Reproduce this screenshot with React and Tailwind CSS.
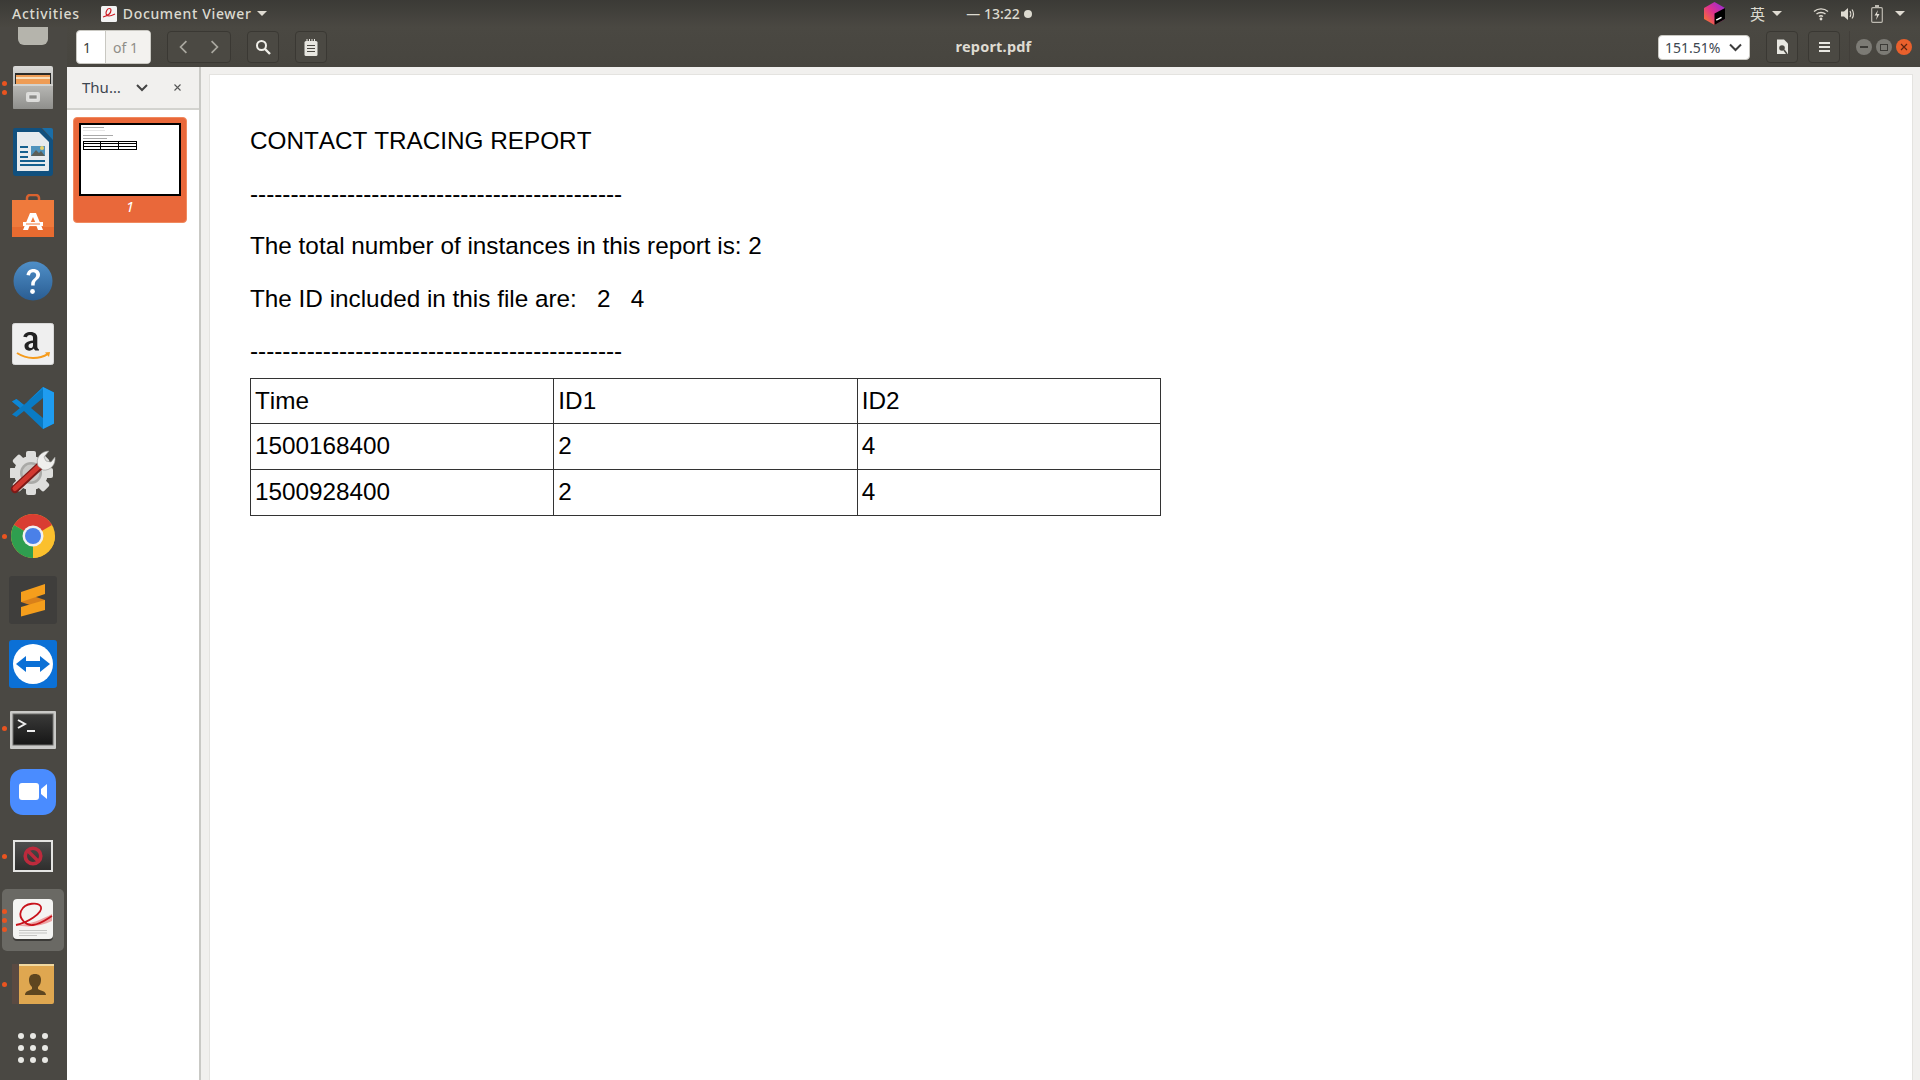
import React from "react";

const UI = { fontFamily: '"Noto Sans", "Open Sans", sans-serif' };

function Files() {
  return (
    <svg width="44" height="46" viewBox="0 0 44 46">
      <defs>
        <linearGradient id="fg" x1="0" y1="0" x2="0" y2="1"><stop offset="0" stopColor="#dadad8" /><stop offset="1" stopColor="#8d8d8a" /></linearGradient>
        <linearGradient id="fd" x1="0" y1="0" x2="0" y2="1"><stop offset="0" stopColor="#b9b9b6" /><stop offset="1" stopColor="#8f8f8c" /></linearGradient>
      </defs>
      <rect x="2" y="1" width="40" height="43" rx="2" fill="url(#fg)" />
      <rect x="4" y="8" width="36" height="11" fill="#2b2a28" />
      <rect x="5" y="10" width="34" height="9" fill="#ee9c55" />
      <rect x="5" y="12" width="34" height="2" fill="#f7dcb9" />
      <rect x="2" y="19" width="40" height="25" rx="1" fill="url(#fd)" />
      <rect x="2" y="19" width="40" height="2" fill="#d2d2cf" />
      <rect x="15" y="27" width="14" height="10" rx="2" fill="#dcdcda" />
      <rect x="18" y="30" width="8" height="4" fill="#8b8b88" stroke="#eee" strokeWidth="0.6" />
    </svg>
  );
}
function Writer() {
  return (
    <svg width="42" height="50" viewBox="0 0 42 50">
      <path d="M3 1h26l12 12v33a3 3 0 0 1-3 3H4a3 3 0 0 1-3-3V3a2 2 0 0 1 2-2z" fill="#11507e" />
      <path d="M30 1h9a2 2 0 0 1 2 2v10z" fill="#1a6ea8" />
      <path d="M5 5h22l10 10v28a1 1 0 0 1-1 1H5z" fill="#e7ebee" />
      <rect x="19" y="19" width="14" height="10" fill="#4f93bd" />
      <path d="M19 29l5-6 3 3 2-2 4 5z" fill="#5b5f58" />
      <circle cx="30" cy="21" r="2" fill="#e7cf6a" />
      <g fill="#14608f">
        <rect x="8" y="19" width="8" height="2" /><rect x="8" y="24" width="8" height="2" /><rect x="8" y="29" width="8" height="2" />
        <rect x="8" y="33" width="25" height="2" /><rect x="8" y="37" width="25" height="2" />
      </g>
    </svg>
  );
}
function Store() {
  return (
    <svg width="42" height="44" viewBox="0 0 42 44">
      <path d="M15 8V4a3 3 0 0 1 3-3h6a3 3 0 0 1 3 3v4" fill="none" stroke="#d9622f" strokeWidth="2.500" />
      <rect x="0" y="6" width="42" height="37" fill="#ef7a3c" />
      <rect x="0" y="33" width="42" height="10" fill="#e86b30" />
      <path d="M18 19h6l7 17h-5l-1.500-4h-7l-1.500 4h-5zM21 23l-2.200 5h4.400z" fill="#fff" fillRule="evenodd" />
      <rect x="11" y="28" width="20" height="4" fill="#fff" />
      <rect x="14" y="29.500" width="14" height="1" fill="#ef7a3c" />
    </svg>
  );
}
function Help() {
  return (
    <svg width="40" height="40" viewBox="0 0 40 40" className="mt-[2px]">
      <defs><linearGradient id="hg" x1="0" y1="0" x2="0" y2="1"><stop offset="0" stopColor="#4f8fc8" /><stop offset="1" stopColor="#2a5d92" /></linearGradient></defs>
      <circle cx="20" cy="20" r="19.500" fill="url(#hg)" />
      <path d="M13.500 14c.6-4 3.400-6 6.800-6 4 0 6.700 2.400 6.700 5.800 0 4.700-5.300 5-5.300 9.700v1h-3.500v-1.500c0-5 5-5.300 5-9 0-1.700-1.300-2.800-3-2.800-1.900 0-3 1.200-3.300 3.300z" fill="#fff" />
      <circle cx="19.500" cy="30.500" r="2.400" fill="#fff" />
    </svg>
  );
}
function Amazon() {
  return (
    <svg width="42" height="42" viewBox="0 0 42 42">
      <rect x="0.500" y="0.500" width="41" height="41" rx="2" fill="#efefef" stroke="#d8d8d8" />
      <path d="M21 17.500c-6 .8-8.500 2.300-8.500 5.800 0 2.800 2 4.400 4.600 4.400 2 0 3.300-.8 4.400-2.100l1.800 2h3.700v-1c-1-1-1.700-1.800-1.700-3.200V14.800c0-3.600-2.400-5.800-6.800-5.800-4 0-6.600 1.900-7.200 4.700l3.700.6c.3-1.500 1.500-2.200 3-2.200 2 0 3 1 3 2.700zm0 2.500v2.400c0 1.600-1.100 2.600-2.500 2.600-1.300 0-2-.8-2-2 0-1.700 1.400-2.700 4.500-3z" fill="#222" />
      <path d="M5 30c10 6.500 22 6.500 31 .8" fill="none" stroke="#f59b1c" strokeWidth="2" />
      <path d="M33 29.500l5-.5-1 5z" fill="#f59b1c" />
    </svg>
  );
}
function VSCode() {
  return (
    <svg width="42" height="44" viewBox="0 0 42 44">
      <path d="M31 1L42 6.500v31L31 43 12 25l-7.500 6L0 28.500 8 22 0 15.500 4.500 13 12 19z" fill="#0a7bc4" />
      <path d="M31 1L42 6.500v31L31 43z" fill="#1f9cf0" />
      <path d="M31 12L19 22l12 10z" fill="#4a4843" />
      <path d="M31 1L12 19l-7.500-6L0 15.500 8 22l23-19z" fill="#0e86d4" />
    </svg>
  );
}
function Tools() {
  return (
    <svg width="46" height="46" viewBox="0 0 46 46">
      <g fill="#dededc">
        <circle cx="21" cy="24" r="17" />
        <rect x="16" y="2" width="10" height="44" rx="2" />
        <rect x="-1" y="19" width="44" height="10" rx="2" />
        <rect x="16" y="2" width="10" height="44" rx="2" transform="rotate(45 21 24)" />
        <rect x="16" y="2" width="10" height="44" rx="2" transform="rotate(-45 21 24)" />
      </g>
      <circle cx="21" cy="24" r="11" fill="#a9a9a6" />
      <circle cx="21" cy="24" r="8.500" fill="#c9c9c6" />
      <path d="M5 40L32 15" stroke="#7d1a17" strokeWidth="8" strokeLinecap="round" />
      <path d="M5 39.500L32 14.500" stroke="#d2382f" strokeWidth="5" strokeLinecap="round" />
      <path d="M28 17c-3-8 3-15 11-15l-5 6 2 4 5 1 4-5c1 8-5 14-12 13z" fill="#efefed" stroke="#8f8f8c" strokeWidth="0.600" />
    </svg>
  );
}
function Chrome() {
  return (
    <svg width="44" height="44" viewBox="0 0 44 44">
      <circle cx="22" cy="22" r="22" fill="#fbc02d" />
      <path d="M22 22L3 11A22 22 0 0 1 41 11z" fill="#d93d32" />
      <path d="M22 22L3 11A22 22 0 0 0 22 44l0 0z" fill="#2f9e4f" />
      <path d="M22 22h22A22 22 0 0 1 22 44z" fill="#fbc02d" />
      <circle cx="22" cy="22" r="10.500" fill="#f1f1f1" />
      <circle cx="22" cy="22" r="8" fill="#4a80e8" />
    </svg>
  );
}
function Sublime() {
  return (
    <svg width="48" height="48" viewBox="0 0 48 48">
      <rect width="48" height="48" rx="3" fill="#3f3e3c" />
      <path d="M12 16L36 24v10L12 26z" fill="#d9801a" />
      <path d="M12 16L36 8v10L12 26z" fill="#f59e1c" />
      <path d="M12 31l24-7v10l-24 6.500z" fill="#f59e1c" />
    </svg>
  );
}
function TeamViewer() {
  return (
    <svg width="48" height="48" viewBox="0 0 48 48">
      <rect width="48" height="48" rx="3" fill="#0b70d6" />
      <circle cx="24" cy="24" r="20" fill="#fff" />
      <path d="M7 24l10-8v5h14v-5l10 8-10 8v-5H17v5z" fill="#0b70d6" />
    </svg>
  );
}
function Terminal() {
  return (
    <svg width="46" height="38" viewBox="0 0 46 38" className="mt-[3px]">
      <defs><linearGradient id="tg" x1="0" y1="0" x2="0" y2="1"><stop offset="0" stopColor="#3a3a39" /><stop offset="1" stopColor="#161616" /></linearGradient></defs>
      <rect width="46" height="38" rx="1" fill="#c9c9c7" />
      <rect x="3" y="3" width="40" height="31" fill="url(#tg)" stroke="#6a6a68" />
      <path d="M8 9l7 4-7 4" fill="none" stroke="#eee" strokeWidth="2" />
      <rect x="17" y="19" width="8" height="2" fill="#eee" />
    </svg>
  );
}
function Zoom() {
  return (
    <svg width="46" height="46" viewBox="0 0 46 46">
      <rect width="46" height="46" rx="13" fill="#4a8cff" />
      <rect x="9" y="14" width="20" height="17" rx="3" fill="#fff" />
      <path d="M31 20l6-5v15l-6-5z" fill="#fff" />
    </svg>
  );
}
function NoSign() {
  return (
    <svg width="40" height="32" viewBox="0 0 40 32">
      <defs><linearGradient id="ng" x1="0" y1="0" x2="0" y2="1"><stop offset="0" stopColor="#4e4e4d" /><stop offset="1" stopColor="#2e2e2d" /></linearGradient></defs>
      <rect width="40" height="32" fill="#e4e4e2" />
      <rect x="2" y="2" width="36" height="28" fill="url(#ng)" />
      <circle cx="20" cy="16" r="7.800" fill="none" stroke="#bd2a3c" strokeWidth="3.600" />
      <path d="M14.500 10.500l11 11" stroke="#bd2a3c" strokeWidth="3.400" />
    </svg>
  );
}
function Evince() {
  return (
    <svg width="40" height="42" viewBox="0 0 40 42">
      <rect width="40" height="42" rx="4" fill="#3c3b38" />
      <rect width="40" height="40" rx="4" fill="#f4f4f2" />
      <path d="M3 26c14 0 26-6 36-11v7c-10 5-24 7-36 4z" fill="#eda3a3" />
      <path d="M3 26C14 24 30 14 28 8 26 3 12 3 8 12c-3 8 6 15 12 14 8-1 14-6 19-9" fill="none" stroke="#c8131c" strokeWidth="1.800" />
      <g fill="#c4c4c2"><rect x="6" y="31" width="28" height="1" /><rect x="6" y="33.500" width="28" height="1" /><rect x="6" y="36" width="18" height="1" /></g>
    </svg>
  );
}
function Contacts() {
  return (
    <svg width="42" height="40" viewBox="0 0 42 40">
      <rect width="42" height="40" rx="2" fill="#dfa750" />
      <rect width="42" height="2" fill="#f0d8a0" />
      <rect width="7" height="40" fill="#5a4a42" />
      <path d="M13 31c0-4 4-4 7-6v-2c-2-2-3-4-3-7 0-4 2-6 6-6s6 2 6 6c0 3-1 5-3 7v2c3 2 8 2 8 6z" fill="#5e4620" />
    </svg>
  );
}
function Grid() {
  return (
    <div className="grid grid-cols-3 gap-x-[6px] gap-y-[6px]">
      {[1, 2, 3, 4, 5, 6, 7, 8, 9].map((i) => (
        <div key={i} className="w-[6px] h-[6px] rounded-full bg-[#e8e8e4]" />
      ))}
    </div>
  );
}

const dock = [
  { I: Files, dots: 2 },
  { I: Writer },
  { I: Store },
  { I: Help },
  { I: Amazon },
  { I: VSCode },
  { I: Tools },
  { I: Chrome, dots: 1 },
  { I: Sublime },
  { I: TeamViewer },
  { I: Terminal, dots: 1 },
  { I: Zoom },
  { I: NoSign, dots: 1 },
  { I: Evince, dots: 3, active: true },
  { I: Contacts, dots: 1 },
  { I: Grid },
];

function Dock() {
  return (
    <aside className="w-[67px] shrink-0 bg-[#4a4843] flex flex-col overflow-hidden">
      <div className="h-[29px] shrink-0 flex justify-center pr-px">
        <div className="w-[30px] h-[18px] rounded-b-[6px] bg-[#b5b4ac]" />
      </div>
      {dock.map(({ I, dots, active }, i) => (
        <div key={i} className="relative h-[64px] shrink-0 flex items-center justify-center pr-px">
          {active && <div className="absolute left-[2px] top-[1px] w-[62px] h-[62px] rounded-[5px] bg-[#6a6964]" />}
          {dots > 0 && (
            <div className="absolute left-[2px] top-0 bottom-0 flex flex-col justify-center gap-[4px]">
              {Array.from({ length: dots }).map((_, k) => (
                <div key={k} className="w-[5px] h-[5px] rounded-full bg-[#e95420]" />
              ))}
            </div>
          )}
          <div className="relative flex"><I /></div>
        </div>
      ))}
    </aside>
  );
}

function Caret({ className = "" }) {
  return <div className={"w-0 h-0 border-l-[5px] border-r-[5px] border-t-[5px] border-l-transparent border-r-transparent border-t-[#dfdbd2] " + className} />;
}

function TopBar() {
  return (
    <header className="h-[27px] shrink-0 grid grid-cols-[1fr_auto_1fr] items-center bg-gradient-to-b from-[#3b3a36] to-[#4a4842] text-[#dcdad0] text-[14px]" style={UI}>
      <div className="flex items-center pl-[12px]">
        <span className="font-medium tracking-[0.75px]">Activities</span>
        <svg className="ml-[21px]" width="16" height="16" viewBox="0 0 16 16">
          <rect width="16" height="16" rx="1.500" fill="#f3f3f3" />
          <path d="M2 11c4-1 8-3 8-7 0-2-3-2-4 0-2 3-1 6 2 6 2 0 4-1 6-2" fill="none" stroke="#cc1a22" strokeWidth="1.200" />
        </svg>
        <span className="ml-[6px] font-medium tracking-[0.65px]">Document Viewer</span>
        <Caret className="ml-[5px]" />
      </div>
      <div className="ml-[78px] flex items-center gap-[4px] text-[14px] font-medium">
        <span>— 13:22</span>
        <div className="w-[8px] h-[8px] rounded-full bg-[#dcdad0]" />
      </div>
      <div className="flex items-center justify-end pr-[15px]">
        <svg width="21" height="23" viewBox="0 0 21 23">
          <defs><linearGradient id="jb" x1="0" y1="1" x2="1" y2="0"><stop offset="0" stopColor="#fc801d" /><stop offset="0.5" stopColor="#e0318f" /><stop offset="1" stopColor="#8a2be2" /></linearGradient></defs>
          <path d="M10.500 0L21 6v11l-10.500 6L0 17V6z" fill="url(#jb)" />
          <path d="M10.500 11.500L21 6v11l-10.500 6z" fill="#000" />
          <rect x="12" y="16" width="6" height="1.500" fill="#fff" transform="rotate(-28 15 17)" />
        </svg>
        <span className="ml-[25px] text-[15px] leading-none" style={{ fontFamily: '"Noto Sans CJK SC", sans-serif' }}>英</span>
        <Caret className="ml-[7px]" />
        <svg className="ml-[31px]" width="16" height="14" viewBox="0 0 16 14" fill="none" stroke="#dfdbd2" strokeWidth="1.400">
          <path d="M1 4.500c4-3.500 10-3.500 14 0M3.500 7c2.500-2 6.500-2 9 0M6 9.500c1-.8 3-.8 4 0" />
          <circle cx="8" cy="12" r="1.400" fill="#dfdbd2" stroke="none" />
        </svg>
        <svg className="ml-[12px]" width="15" height="14" viewBox="0 0 15 14">
          <path d="M0 4.500h3L7 1v12L3 9.500H0z" fill="#dfdbd2" />
          <path d="M9 4c1 1.500 1 4.500 0 6M11 2.500c2 2.500 2 6.500 0 9" fill="none" stroke="#dfdbd2" strokeWidth="1.200" />
        </svg>
        <svg className="ml-[15px]" width="12" height="18" viewBox="0 0 12 18">
          <rect x="0.700" y="2.700" width="10.600" height="14.600" rx="1" fill="none" stroke="#bdbab1" strokeWidth="1.200" />
          <rect x="4" y="0" width="4" height="2" fill="#bdbab1" />
          <path d="M7 5L3.500 10.500H6L5 15l3.500-6H6z" fill="#dfdbd2" />
        </svg>
        <Caret className="ml-[12px]" />
      </div>
    </header>
  );
}

const toolBtn = "h-[32px] flex items-center justify-center rounded-[4px] border border-[#3a3833] bg-[#4b4943]";

function ToolBar() {
  return (
    <div className="h-[40px] shrink-0 grid grid-cols-[1fr_auto_1fr] items-center bg-gradient-to-b from-[#4a4842] to-[#47453f] text-[14px]" style={UI}>
      <div className="flex items-center pl-[9px]">
        <div className="flex h-[34px] w-[75px] rounded-[4px] overflow-hidden border border-[#c9c8c2] bg-white">
          <div className="w-[28px] flex items-center pl-[6px] text-[#3d3d3d]">1</div>
          <div className="flex-1 flex items-center pl-[7px] border-l border-[#c9c8c2] bg-[#f3f2ef] text-[#8f8e88]">of 1</div>
        </div>
        <div className={toolBtn + " w-[64px] ml-[16px]"}>
          <svg width="64" height="30" viewBox="0 0 64 30" fill="none" stroke="#a9a79f" strokeWidth="1.800">
            <path d="M19 9l-6 6 6 6M45 9l6 6-6 6" />
          </svg>
        </div>
        <div className={toolBtn + " w-[32px] ml-[16px]"}>
          <svg width="16" height="16" viewBox="0 0 16 16" fill="none" stroke="#f0efe9" strokeWidth="2">
            <circle cx="6.500" cy="6.500" r="4.500" /><path d="M10 10l5 5" strokeWidth="2.400" />
          </svg>
        </div>
        <div className={toolBtn + " w-[32px] ml-[16px]"}>
          <svg width="14" height="17" viewBox="0 0 14 17">
            <rect x="0.500" y="2" width="13" height="15" rx="1.500" fill="#e8e7e1" />
            <path d="M3 0v3M5.500 0v3M8 0v3M10.500 0v3" stroke="#e8e7e1" strokeWidth="1" />
            <path d="M3 6.500h8M3 9.500h8M3 12.500h8" stroke="#4b4943" strokeWidth="1.200" />
          </svg>
        </div>
      </div>
      <div className="font-bold text-[14.5px] tracking-[0.2px] text-[#dfdbd2]">report.pdf</div>
      <div className="flex items-center justify-end">
        <div className="w-[92px] h-[25px] rounded-[4px] bg-white border border-[#c9c8c2] flex items-center pl-[6px] text-[#3d4650] text-[14px]">
          <span>151.51%</span>
          <svg className="ml-[9px]" width="13" height="9" viewBox="0 0 13 9" fill="none" stroke="#3d3d3d" strokeWidth="2"><path d="M1 1.500l5.500 5.500L12 1.500" /></svg>
        </div>
        <div className={toolBtn + " w-[32px] ml-[16px]"}>
          <svg width="13" height="16" viewBox="0 0 13 16">
            <path d="M1 .5h7l4 4V15H1z" fill="#e8e7e1" />
            <circle cx="6" cy="9" r="2.800" fill="#4b4943" />
            <path d="M8 11l3 4" stroke="#4b4943" strokeWidth="1.600" />
          </svg>
        </div>
        <div className={toolBtn + " w-[32px] ml-[10px]"}>
          <svg width="11" height="10" viewBox="0 0 11 10" fill="#e8e7e1"><rect width="11" height="2" /><rect y="4" width="11" height="2" /><rect y="8" width="11" height="2" /></svg>
        </div>
        <div className="w-px h-[32px] ml-[9px] bg-[#423f3a]" />
        <div className="flex items-center gap-[4px] ml-[6px] pr-[8px]">
          <div className="w-[16px] h-[16px] rounded-full bg-[#7c7b75] flex items-center justify-center"><div className="w-[8px] h-[1.500px] bg-[#3c3b37]" /></div>
          <div className="w-[16px] h-[16px] rounded-full bg-[#7c7b75] flex items-center justify-center"><div className="w-[8px] h-[7px] border border-[#3c3b37]" /></div>
          <div className="w-[16px] h-[16px] rounded-full bg-[#e9602c] flex items-center justify-center">
            <svg width="8" height="8" viewBox="0 0 8 8" stroke="#5c2410" strokeWidth="1.200"><path d="M1 1l6 6M7 1L1 7" /></svg>
          </div>
        </div>
      </div>
    </div>
  );
}

function Sidebar() {
  return (
    <div className="w-[134px] shrink-0 flex flex-col bg-white border-r-[2px] border-[#c9c9c5]">
      <div className="h-[43px] shrink-0 flex items-center bg-[#f1f0ee] border-b-[2px] border-[#d3d3cf] text-[15px] text-[#3d4650]" style={UI}>
        <span className="ml-[15px]">Thu…</span>
        <svg className="ml-[15px]" width="12" height="8" viewBox="0 0 12 8" fill="none" stroke="#444" strokeWidth="2"><path d="M1 1l5 5 5-5" /></svg>
        <svg className="ml-[26px]" width="7" height="7" viewBox="0 0 7 7" stroke="#555" strokeWidth="1.100"><path d="M.5.500l6 6M6.500.500l-6 6" /></svg>
      </div>
      <div className="mt-[7px] ml-[6px] w-[114px] h-[106px] rounded-[4px] bg-[#e9683a] border border-[#f08a5f] flex flex-col items-center pt-[5px]">
        <div className="w-[102px] h-[73px] bg-white border-2 border-black pl-[2px] pt-[2px]">
          <div className="w-[21px] h-px bg-[#aaa]" />
          <div className="w-[22px] h-px bg-[#e6e6e6] mt-[2px]" />
          <div className="w-[30px] h-px bg-[#aaa] mt-[4px]" />
          <div className="w-[24px] h-px bg-[#aaa] mt-[2px]" />
          <div className="mt-[2px] w-[54px] h-[9px] border border-black grid grid-cols-3 grid-rows-3">
            {[0, 1, 2, 3, 4, 5, 6, 7, 8].map((i) => (
              <div key={i} className={"border-black " + (i % 3 < 2 ? "border-r " : "") + (i < 6 ? "border-b" : "")} />
            ))}
          </div>
        </div>
        <div className="italic text-[15px] text-white leading-[20px]" style={UI}>1</div>
      </div>
    </div>
  );
}

const rows = [
  ["Time", "ID1", "ID2"],
  ["1500168400", "2", "4"],
  ["1500928400", "2", "4"],
];

function DocPage() {
  return (
    <div className="flex-1 bg-[#f1f0ee] pl-[8px] pr-[7px] pt-[7px] overflow-hidden">
      <div className="h-[1100px] bg-white border border-[#e4e3e0] pl-[40px] pt-[40px] text-black text-[24.3px] [font-kerning:none]" style={{ fontFamily: '"Liberation Sans", Arial, sans-serif' }}>
        <p className="leading-[52.5px] whitespace-pre">CONTACT TRACING REPORT</p>
        <p className="leading-[52.5px] whitespace-pre">{"-".repeat(46)}</p>
        <p className="leading-[52.5px] whitespace-pre">The total number of instances in this report is: 2</p>
        <p className="leading-[52.5px] whitespace-pre">The ID included in this file are:   2   4</p>
        <p className="leading-[52.5px] whitespace-pre">{"-".repeat(46)}</p>
        <table className="border-collapse mt-0 w-[911px] table-fixed">
          <tbody>
            {rows.map((r, i) => (
              <tr key={i} className="h-[45.700px]">
                {r.map((c, j) => (
                  <td key={j} className="border border-[#333] pl-[4px] p-0 leading-none">{c}</td>
                ))}
              </tr>
            ))}
          </tbody>
        </table>
      </div>
    </div>
  );
}

export default function App() {
  return (
    <div className="w-[1920px] h-[1080px] overflow-hidden flex flex-col bg-[#4a4843]">
      <TopBar />
      <div className="flex-1 flex min-h-0">
        <Dock />
        <div className="flex-1 flex flex-col min-w-0">
          <ToolBar />
          <div className="flex-1 flex min-h-0">
            <Sidebar />
            <DocPage />
          </div>
        </div>
      </div>
    </div>
  );
}
